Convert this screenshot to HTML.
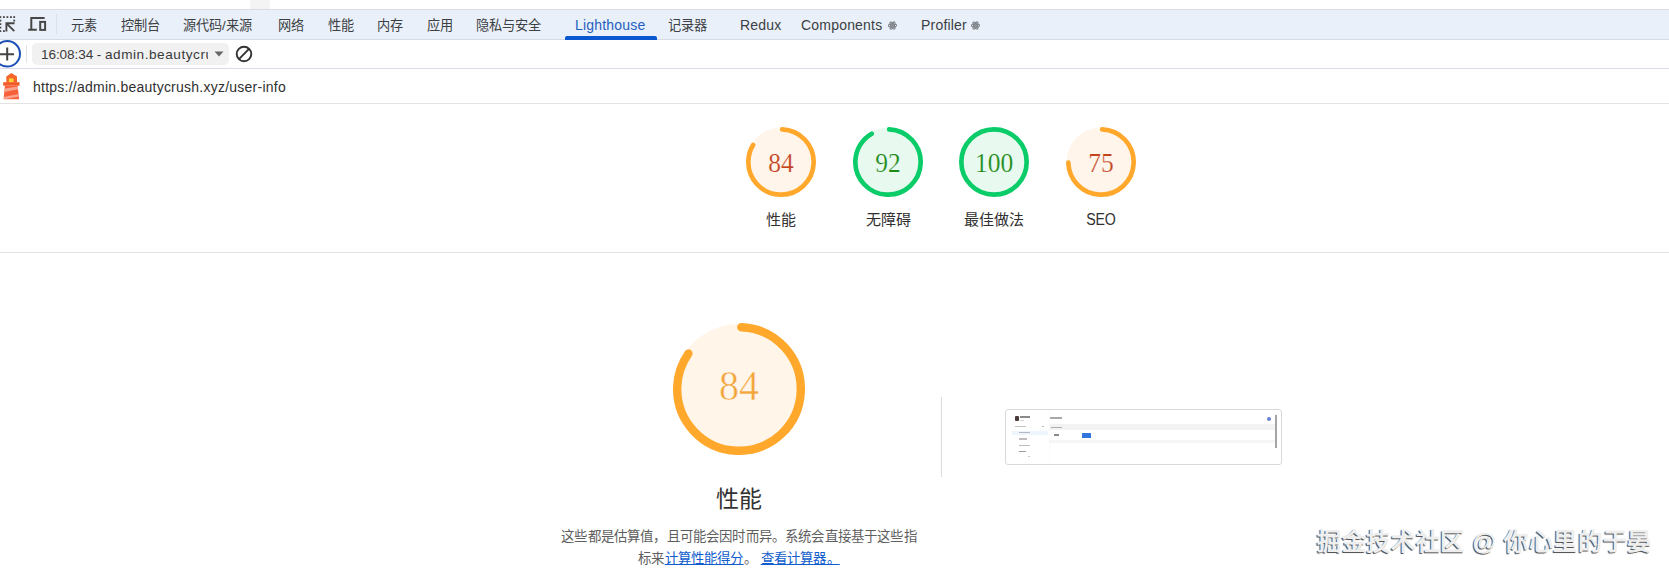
<!DOCTYPE html>
<html lang="zh-CN"><head><meta charset="utf-8">
<style>
*{margin:0;padding:0;box-sizing:border-box}
html,body{width:1669px;height:573px;overflow:hidden;background:#fff;font-family:"Liberation Sans",sans-serif;color:#303030}
.abs{position:absolute}
#graybk{left:250px;top:0;width:20px;height:9px;background:#f4f4f4}
#tabbar{left:0;top:9px;width:1669px;height:31px;background:#eaf0f9;border-top:1px solid #d8dce4;border-bottom:1px solid #d7dbe3}
.tab{position:absolute;top:17px;font-size:13.2px;color:#3c3f44;white-space:nowrap;line-height:17px}
.en{font-size:14px;letter-spacing:0.2px}
#row2{left:0;top:40px;width:1669px;height:29px;background:#fff;border-bottom:1px solid #dcdce8}
#row3{left:0;top:69px;width:1669px;height:35px;background:#fff;border-bottom:1px solid #e3e3e3}
#sep{left:0;top:252px;width:1669px;height:1px;background:#e3e3e3}
.gauge{position:absolute}
.gnum{position:absolute;font-family:"Liberation Serif",serif;text-align:center;white-space:nowrap;transform:scaleY(1.065)}
.glabel{position:absolute;width:120px;text-align:center;font-size:15px;color:#303030;white-space:nowrap;line-height:18px;margin-top:0.8px}
#desc{position:absolute;left:489px;top:526.2px;width:500px;text-align:center;font-size:13.4px;letter-spacing:0.17px;line-height:22px;color:#5e5e5e}
#desc a{color:#0f5dcc;text-decoration:underline}
#wm{position:absolute;left:1317px;top:525.5px;font-size:24px;letter-spacing:0.68px;font-weight:700;line-height:32px;color:#eeeeee;white-space:nowrap;text-shadow:-1px 1px 0.7px rgba(0,0,0,.7)}
</style></head><body>
<div class="abs" id="graybk"></div>
<div class="abs" id="tabbar"></div>
<!-- inspect icon -->
<svg class="abs" style="left:0;top:9px" width="20" height="30" viewBox="0 0 20 30">
 <g fill="#474747">
  <rect x="-0.5" y="7.2" width="1.8" height="1.8"/><rect x="3" y="7.2" width="1.8" height="1.8"/><rect x="6.5" y="7.2" width="1.8" height="1.8"/><rect x="10" y="7.2" width="1.8" height="1.8"/><rect x="13.3" y="7.2" width="1.8" height="1.8"/>
  <rect x="13.3" y="10.7" width="1.8" height="1.8"/>
  <rect x="-0.5" y="10.7" width="1.8" height="1.8"/><rect x="-0.5" y="14.2" width="1.8" height="1.8"/><rect x="-0.5" y="17.7" width="1.8" height="1.8"/><rect x="-0.5" y="21.2" width="1.8" height="1.8"/>
  <rect x="3" y="21.2" width="1.8" height="1.8"/>
 </g>
 <path d="M6.4 22.5V14.3H14.6M6.8 14.7L14.3 22.2" stroke="#474747" stroke-width="1.9" fill="none"/>
</svg>
<!-- device icon -->
<svg class="abs" style="left:26px;top:9px" width="24" height="30" viewBox="0 0 24 30">
 <path d="M18.6 9H5.3V20.8M2.2 20.8H10.8" stroke="#474747" stroke-width="2" fill="none"/>
 <rect x="14.2" y="12.9" width="4.9" height="8" stroke="#474747" stroke-width="2" fill="none"/>
</svg>
<div class="abs" style="left:56px;top:14px;width:1px;height:20px;background:#dde2ea"></div>
<div class="tab" style="left:71px">元素</div>
<div class="tab" style="left:121px">控制台</div>
<div class="tab" style="left:183px">源代码/来源</div>
<div class="tab" style="left:278px">网络</div>
<div class="tab" style="left:328px">性能</div>
<div class="tab" style="left:377px">内存</div>
<div class="tab" style="left:427px">应用</div>
<div class="tab" style="left:476px">隐私与安全</div>
<div class="tab en" style="left:575px;color:#1f5fbf">Lighthouse</div>
<div class="abs" style="left:565px;top:36px;width:92px;height:4px;background:#0b57d0;border-radius:2px 2px 0 0"></div>
<div class="tab" style="left:668px">记录器</div>
<div class="tab en" style="left:740px">Redux</div>
<div class="tab en" style="left:801px">Components</div>
<div class="tab en" style="left:921px">Profiler</div>
<svg class="abs" style="left:888px;top:21px" width="9" height="9" viewBox="-4.5 -4.5 9 9"><g fill="none" stroke="#7d8086" stroke-width="1.1"><ellipse rx="4" ry="1.6"/><ellipse rx="4" ry="1.6" transform="rotate(60)"/><ellipse rx="4" ry="1.6" transform="rotate(120)"/></g><circle r="1" fill="#7d8086"/></svg>
<svg class="abs" style="left:971px;top:21px" width="9" height="9" viewBox="-4.5 -4.5 9 9"><g fill="none" stroke="#7d8086" stroke-width="1.1"><ellipse rx="4" ry="1.6"/><ellipse rx="4" ry="1.6" transform="rotate(60)"/><ellipse rx="4" ry="1.6" transform="rotate(120)"/></g><circle r="1" fill="#7d8086"/></svg>

<div class="abs" id="row2"></div>
<!-- plus circle -->
<svg class="abs" style="left:0;top:39px" width="26" height="30" viewBox="0 0 26 30">
 <circle cx="7.2" cy="14.8" r="12.8" fill="none" stroke="#1b4fb5" stroke-width="2"/>
 <path d="M0 15.3H14M7.2 8.6V21.6" stroke="#444" stroke-width="2" fill="none"/>
</svg>
<div class="abs" style="left:26px;top:45px;width:1px;height:18px;background:#e2e2e2"></div>
<div class="abs" style="left:32px;top:43px;width:197px;height:22px;background:#f1f1f2;border-radius:5px"></div>
<div class="abs" style="left:41px;top:46.5px;width:167px;height:18px;overflow:hidden;white-space:nowrap;font-size:13.6px;line-height:16px;color:#3a3a3a"><span style="letter-spacing:-0.1px">16:08:34 - </span><span style="letter-spacing:0.55px">admin.beautycrush.xyz</span></div>
<svg class="abs" style="left:214px;top:51px" width="10" height="6" viewBox="0 0 10 6"><path d="M0.5 0.5H9.5L5 5.5Z" fill="#666"/></svg>
<svg class="abs" style="left:234px;top:45px" width="20" height="18" viewBox="0 0 20 18">
 <circle cx="10" cy="9" r="7.3" fill="none" stroke="#333" stroke-width="1.9"/>
 <path d="M15 3.8L5 14.2" stroke="#333" stroke-width="1.9"/>
</svg>

<div class="abs" id="row3"></div>
<!-- lighthouse icon -->
<svg class="abs" style="left:0;top:68px" width="24" height="36" viewBox="0 0 24 36">
 <path d="M6.3 14.5V8.6L11.3 5L17 8.6V14.5Z" fill="#f5652a"/>
 <rect x="8.9" y="10.4" width="4.6" height="4.3" fill="#fbd53a"/>
 <rect x="3.2" y="14.2" width="16.3" height="3.5" fill="#f35a28"/>
 <path d="M4.9 17.7H17.6L19.1 31.2H3.6Z" fill="#f8603a"/>
 <path d="M4.7 20.6L17.9 18.6L18.1 21.2L4.4 24.1Z" fill="#f9a490"/>
 <path d="M3.9 28.9L18.8 26L19 28.4L3.7 31.2Z" fill="#f9a490"/>
</svg>
<div class="abs" style="left:33px;top:78.5px;font-size:14px;letter-spacing:0.24px;line-height:16px;color:#303030;white-space:nowrap">https://admin.beautycrush.xyz/user-info</div>

<!-- small gauges -->
<svg class="gauge" style="left:746px;top:127px" width="70" height="70" viewBox="0 0 120 120">
 <circle cx="60" cy="60" r="59" fill="#fff5ea" stroke="none"/>
 <circle cx="60" cy="60" r="56" fill="none" stroke="#ffa82c" stroke-width="8" stroke-linecap="round" stroke-dasharray="292 351.86" transform="rotate(-87.9 60 60)"/>
</svg>
<div class="gnum" style="left:741px;top:147.5px;width:80px;font-size:25.5px;line-height:30px;color:#c2431c;-webkit-text-stroke:0.2px #fff5ea">84</div>
<div class="glabel" style="left:721px;top:210px">性能</div>

<svg class="gauge" style="left:853px;top:127px" width="70" height="70" viewBox="0 0 120 120">
 <circle cx="60" cy="60" r="59" fill="#e8f9ef" stroke="none"/>
 <circle cx="60" cy="60" r="56" fill="none" stroke="#0acc68" stroke-width="8" stroke-linecap="round" stroke-dasharray="320 351.86" transform="rotate(-87.9 60 60)"/>
</svg>
<div class="gnum" style="left:848px;top:147.5px;width:80px;font-size:25.5px;line-height:30px;color:#1d8a18;-webkit-text-stroke:0.2px #e8f9ef">92</div>
<div class="glabel" style="left:828px;top:210px">无障碍</div>

<svg class="gauge" style="left:959px;top:127px" width="70" height="70" viewBox="0 0 120 120">
 <circle cx="60" cy="60" r="59" fill="#e8f9ef" stroke="none"/>
 <circle cx="60" cy="60" r="56" fill="none" stroke="#0acc68" stroke-width="8"/>
</svg>
<div class="gnum" style="left:954px;top:147.5px;width:80px;font-size:25.5px;line-height:30px;color:#1d8a18;-webkit-text-stroke:0.2px #e8f9ef">100</div>
<div class="glabel" style="left:934px;top:210px">最佳做法</div>

<svg class="gauge" style="left:1066px;top:127px" width="70" height="70" viewBox="0 0 120 120">
 <circle cx="60" cy="60" r="59" fill="#fff5ea" stroke="none"/>
 <circle cx="60" cy="60" r="56" fill="none" stroke="#ffa82c" stroke-width="8" stroke-linecap="round" stroke-dasharray="260.4 351.86" transform="rotate(-87.9 60 60)"/>
</svg>
<div class="gnum" style="left:1061px;top:147.5px;width:80px;font-size:25.5px;line-height:30px;color:#c2431c;-webkit-text-stroke:0.2px #fff5ea">75</div>
<div class="glabel" style="left:1041px;top:209px;font-size:14.2px;letter-spacing:-0.2px;transform:scaleY(1.1)">SEO</div>

<div class="abs" id="sep"></div>

<!-- big gauge -->
<svg class="gauge" style="left:673px;top:323px" width="132" height="132" viewBox="0 0 132 132">
 <circle cx="66" cy="66" r="65" fill="#fff5e9" stroke="none"/>
 <circle cx="66" cy="66" r="61.8" fill="none" stroke="#ffa82c" stroke-width="8.4" stroke-linecap="round" stroke-dasharray="326.2 388.3" transform="rotate(-87.9 66 66)"/>
</svg>
<div class="gnum" style="left:659px;top:363px;width:160px;font-size:40px;line-height:46px;transform:scaleY(1.08);color:#f3a43a;-webkit-text-stroke:0.5px #fff5e9">84</div>
<div class="abs" style="left:639px;top:484px;width:200px;text-align:center;font-size:23px;line-height:30px;color:#333">性能</div>
<div id="desc">这些都是估算值，且可能会因时而异。系统会直接基于这些指<br>标来<a>计算性能得分</a>。 <a>查看计算器。</a></div>

<div class="abs" style="left:941px;top:397px;width:1px;height:80px;background:#dcdcdc"></div>

<!-- thumbnail -->
<div class="abs" style="left:1005px;top:409px;width:277px;height:56px;border:1px solid #d9d9d9;border-radius:3px;background:#fff;overflow:hidden">
 <div class="abs" style="left:8.6px;top:6px;width:4.6px;height:4.6px;background:#4a3a3a;border-radius:1px"></div>
 <div class="abs" style="left:14.2px;top:6.4px;width:9.6px;height:1.8px;background:#8a8a8a"></div>
 <div class="abs" style="left:14.2px;top:10px;width:3.5px;height:1px;background:#d5d5d5"></div>
 <div class="abs" style="left:9px;top:15.5px;width:11px;height:1.2px;background:#c4c4c4"></div>
 <div class="abs" style="left:36.4px;top:15.8px;width:1.6px;height:1px;background:#bbb"></div>
 <div class="abs" style="left:6px;top:20.8px;width:35.5px;height:4px;background:#eef5fd"></div>
 <div class="abs" style="left:12.7px;top:22.2px;width:11.6px;height:1.2px;background:#b5b9c0"></div>
 <div class="abs" style="left:12.7px;top:28.4px;width:8.1px;height:1.2px;background:#bdbdbd"></div>
 <div class="abs" style="left:12.7px;top:34.9px;width:11.6px;height:1.2px;background:#bdbdbd"></div>
 <div class="abs" style="left:12.7px;top:41px;width:7px;height:1.3px;background:#9a9a9a"></div>
 <div class="abs" style="left:22.3px;top:46.2px;width:1.5px;height:1px;background:#ccc"></div>
 <div class="abs" style="left:42.5px;top:0;width:1px;height:56px;background:#fbfbfb"></div>
 <div class="abs" style="left:44px;top:7.4px;width:12.2px;height:1.8px;background:#a8a8a8"></div>
 <div class="abs" style="left:42.5px;top:14.2px;width:228px;height:5.6px;background:#f3f3f3"></div>
 <div class="abs" style="left:45px;top:17px;width:11.2px;height:1.2px;background:#adadad"></div>
 <div class="abs" style="left:47.6px;top:24.3px;width:5.5px;height:1.4px;background:#8a8a8a"></div>
 <div class="abs" style="left:76.1px;top:23.1px;width:8.9px;height:4.7px;background:#3275dc;border-radius:0.5px"></div>
 <div class="abs" style="left:42.5px;top:30.4px;width:228px;height:3px;background:#f6f6f6"></div>
 <div class="abs" style="left:261.2px;top:6.9px;width:4px;height:4px;border-radius:50%;background:#6a7fcf"></div>
 <div class="abs" style="left:269px;top:5.3px;width:1.6px;height:32.3px;background:#a5a5a5"></div>
</div>

<div id="wm">掘金技术社区 @ 你心里的于晏</div>
</body></html>
